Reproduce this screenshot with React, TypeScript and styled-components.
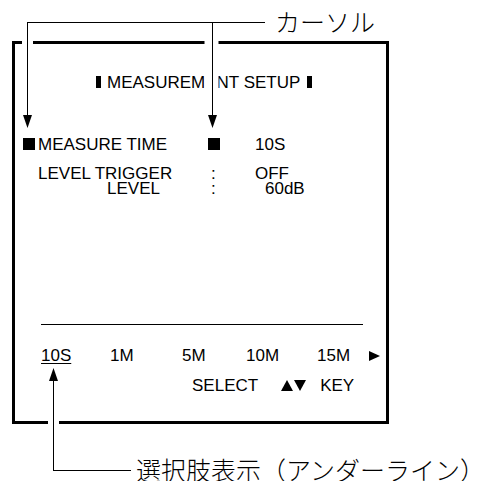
import React from 'react';
import styled, { createGlobalStyle } from 'styled-components';

type Setting = {
  label: string;
  value: string;
  cursor?: boolean;
  labelIndent?: number;
  valueIndent?: number;
  gap: number;
};

const SETTINGS: Setting[] = [
  { label: 'MEASURE TIME', value: '10S', cursor: true, gap: 46 },
  { label: 'LEVEL TRIGGER', value: 'OFF', gap: 14 },
  { label: 'LEVEL', value: '60dB', labelIndent: 69, valueIndent: 10, gap: 0 },
];

const OPTIONS = [
  { label: '10S', selected: true },
  { label: '1M' },
  { label: '5M' },
  { label: '10M' },
  { label: '15M' },
];

const GlobalStyle = createGlobalStyle`
  html, body {
    margin: 0;
    padding: 0;
    background: #fff;
  }
`;

const App = () => {
  return (
    <>
      <GlobalStyle />
      <Page>
        <CalloutRow>
          <CalloutLabel>カーソル</CalloutLabel>
        </CalloutRow>

        <Screen>
          <Title>
            <TitleMark />
            MEASUREMENT SETUP
            <TitleMark $right />
          </Title>

          {SETTINGS.map((s) => (
            <SettingRow key={s.label} $gap={s.gap}>
              <CursorCell>{s.cursor && <CursorMark />}</CursorCell>
              <Label $indent={s.labelIndent ?? 0}>{s.label}</Label>
              <Sep>{s.cursor ? <CursorMark /> : <Colon>:</Colon>}</Sep>
              <Value $indent={s.valueIndent ?? 0}>{s.value}</Value>
            </SettingRow>
          ))}

          <Divider />

          <Options>
            {OPTIONS.map((o) => (
              <Option key={o.label} $selected={!!o.selected}>
                {o.label}
              </Option>
            ))}
            <MoreArrow viewBox="0 0 11 10">
              <polygon points="0,0 11,5 0,10" />
            </MoreArrow>
          </Options>

          <Hint>
            <span>SELECT</span>
            <KeyArrows viewBox="0 0 25 11">
              <polygon points="0,11 12,11 6,0" />
              <polygon points="13,0 25,0 19,11" />
            </KeyArrows>
            <KeyLabel>KEY</KeyLabel>
          </Hint>
        </Screen>

        <BottomCallout>
          <CalloutLabel>選択肢表示（アンダーライン）</CalloutLabel>
        </BottomCallout>

        <Leaders viewBox="0 0 497 481">
          {/* white gaps where the leaders cross the frame and title */}
          <rect x="22" y="30" width="11" height="84" fill="#fff" />
          <rect x="204.5" y="30" width="14" height="84" fill="#fff" />
          <rect x="48" y="400" width="11" height="40" fill="#fff" />

          <rect x="27" y="22" width="238" height="1" />
          <rect x="27" y="22" width="1" height="96" />
          <rect x="212" y="22" width="1" height="96" />
          <polygon points="23,115 32,115 27.5,128" />
          <polygon points="208,115 217,115 212.5,128" />

          <rect x="53" y="378" width="1" height="93" />
          <rect x="53" y="470" width="78" height="1" />
          <polygon points="49,381 58,381 53.5,368" />
        </Leaders>
      </Page>
    </>
  );
};

const Page = styled.div`
  position: relative;
  width: 497px;
  height: 481px;
  overflow: hidden;
  background: #fff;
  color: #000;
`;

const CalloutRow = styled.div`
  height: 41px;
  padding: 9px 0 0 275px;
  box-sizing: border-box;
`;

const CalloutLabel = styled.div`
  font-family: 'Noto Sans CJK JP', sans-serif;
  font-weight: 300;
  font-size: 25px;
  line-height: 25px;
  white-space: nowrap;
`;

const Screen = styled.div`
  margin-left: 12px;
  width: 377px;
  height: 383px;
  box-sizing: border-box;
  border: 3px solid #000;
  padding: 30px 0 27px;
  display: flex;
  flex-direction: column;
  font-family: 'Liberation Sans', Arial, sans-serif;
  font-size: 17px;
  line-height: 17px;
`;

const Title = styled.div`
  padding-left: 81px;
  white-space: nowrap;
`;

const TitleMark = styled.span<{ $right?: boolean }>`
  display: inline-block;
  width: 5px;
  height: 12px;
  background: #000;
  margin: ${(p) => (p.$right ? '0 0 0 7px' : '0 6px 0 0')};
`;

const SettingRow = styled.div<{ $gap: number }>`
  display: flex;
  margin-top: ${(p) => p.$gap}px;
  line-height: 15px;
  white-space: nowrap;
`;

const CursorCell = styled.div`
  width: 23px;
  padding-left: 8px;
  box-sizing: border-box;
`;

const CursorMark = styled.span`
  display: inline-block;
  width: 12px;
  height: 12px;
  background: #000;
`;

const Label = styled.div<{ $indent: number }>`
  width: 170px;
  padding-left: ${(p) => p.$indent}px;
  box-sizing: border-box;
`;

const Sep = styled.div`
  width: 47px;
`;

const Colon = styled.span`
  padding-left: 3px;
`;

const Value = styled.div<{ $indent: number }>`
  padding-left: ${(p) => p.$indent}px;
`;

const Divider = styled.div`
  margin: auto 0 0 26px;
  width: 322px;
  height: 1px;
  background: #000;
`;

const Options = styled.div`
  display: grid;
  grid-template-columns: 69px 72px 64px 71px 52px auto;
  align-items: center;
  margin-top: 22px;
  padding-left: 26px;
`;

const Option = styled.span<{ $selected: boolean }>`
  text-decoration: ${(p) => (p.$selected ? 'underline' : 'none')};
  text-decoration-thickness: 1px;
  text-underline-offset: 2px;
  justify-self: start;
`;

const MoreArrow = styled.svg`
  width: 11px;
  height: 10px;
  fill: #000;
`;

const Hint = styled.div`
  display: flex;
  align-items: center;
  margin-top: 13px;
  padding-left: 177px;
`;

const KeyArrows = styled.svg`
  width: 25px;
  height: 11px;
  margin-left: 23px;
  fill: #000;
`;

const KeyLabel = styled.span`
  margin-left: 14px;
`;

const BottomCallout = styled.div`
  margin-top: 33px;
  padding-left: 136px;
`;

const Leaders = styled.svg`
  position: absolute;
  left: 0;
  top: 0;
  width: 497px;
  height: 481px;
  fill: #000;
  pointer-events: none;
`;

export default App;
